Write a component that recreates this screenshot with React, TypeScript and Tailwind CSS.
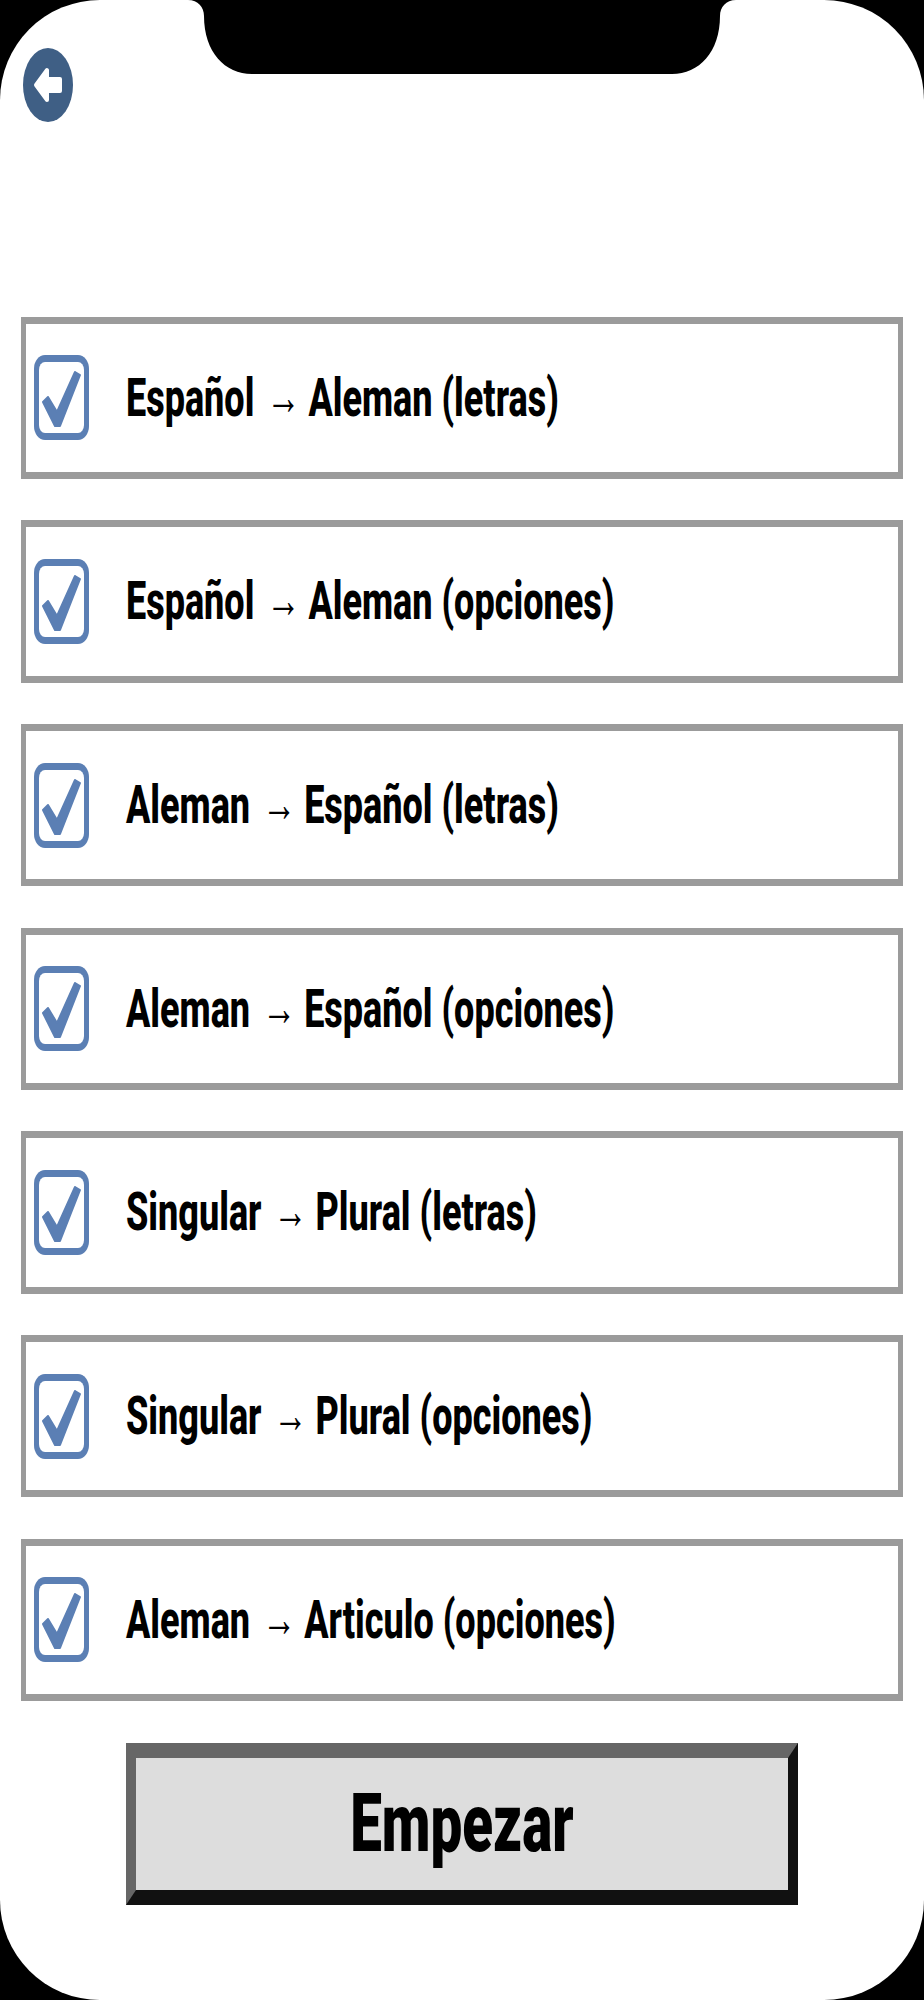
const rows = [
  ["Español", "Aleman (letras)"],
  ["Español", "Aleman (opciones)"],
  ["Aleman", "Español (letras)"],
  ["Aleman", "Español (opciones)"],
  ["Singular", "Plural (letras)"],
  ["Singular", "Plural (opciones)"],
  ["Aleman", "Articulo (opciones)"],
];

function Check() {
  return (
    <svg width="55" height="85" viewBox="0 0 55 85" className="shrink-0">
      <rect x="0" y="0" width="55" height="85" rx="11" ry="14" fill="#5b7fb4" />
      <rect x="5" y="7" width="45" height="71" rx="6" ry="8" fill="#fff" />
      <path d="M9 47 L14 42 L23 57 L41 17 L46 20 L26 71 L21 71 Z" fill="#5b7fb4" stroke="#5b7fb4" strokeWidth="2" strokeLinejoin="round" />
    </svg>
  );
}

export default function App() {
  return (
    <div className="relative h-[2000px] w-[924px] overflow-hidden bg-black font-['Roboto',sans-serif]">
      <div className="h-full w-full rounded-[100px] bg-white pl-[20.7px]">
        <div className="h-[316.7px] pl-[2px] pt-[47.7px]">
          <svg width="50" height="74" viewBox="0 0 50 74">
            <ellipse cx="25" cy="37" rx="25" ry="37" fill="#3f5f85" />
            <path d="M13 37 L24 22 V31 H37 V43 H24 V52 Z" fill="#fff" stroke="#fff" strokeWidth="4" strokeLinejoin="round" />
          </svg>
        </div>
        <div className="flex w-[882.6px] flex-col gap-[41.37px]">
          {rows.map(([a, b]) => (
            <div key={a + b} className="flex h-[162.3px] items-center border-x-[5px] border-y-[7px] border-[#9b9b9b] bg-white pl-[8.3px]">
              <Check />
              <div className="ml-[37px] origin-left scale-y-[1.466] whitespace-nowrap text-[36px] font-extrabold leading-[42px] text-black">
                {a}
                <span className="ml-[12px] mr-[8px] align-[1px] font-['Liberation_Sans',sans-serif] text-[34px] font-bold leading-none">→</span>
                {b}
              </div>
            </div>
          ))}
        </div>
        <div className="ml-[105px] mt-[41.7px] flex h-[162.3px] w-[672.5px] items-center justify-center border-x-[10px] border-y-[15px] border-b-[#111111] border-l-[#666666] border-r-[#111111] border-t-[#666666] bg-[#dddddd]">
          <span className="scale-y-[1.45] text-[56.5px] font-black leading-none text-black">Empezar</span>
        </div>
      </div>
      <svg width="924" height="80" viewBox="0 0 924 80" className="absolute left-0 top-0">
        <path d="M188 0 C198 0 204 7 204 16 C204 52 225 74 252 74 L672 74 C699 74 720 52 720 16 C720 7 726 0 736 0 Z" fill="#000" />
      </svg>
    </div>
  );
}
